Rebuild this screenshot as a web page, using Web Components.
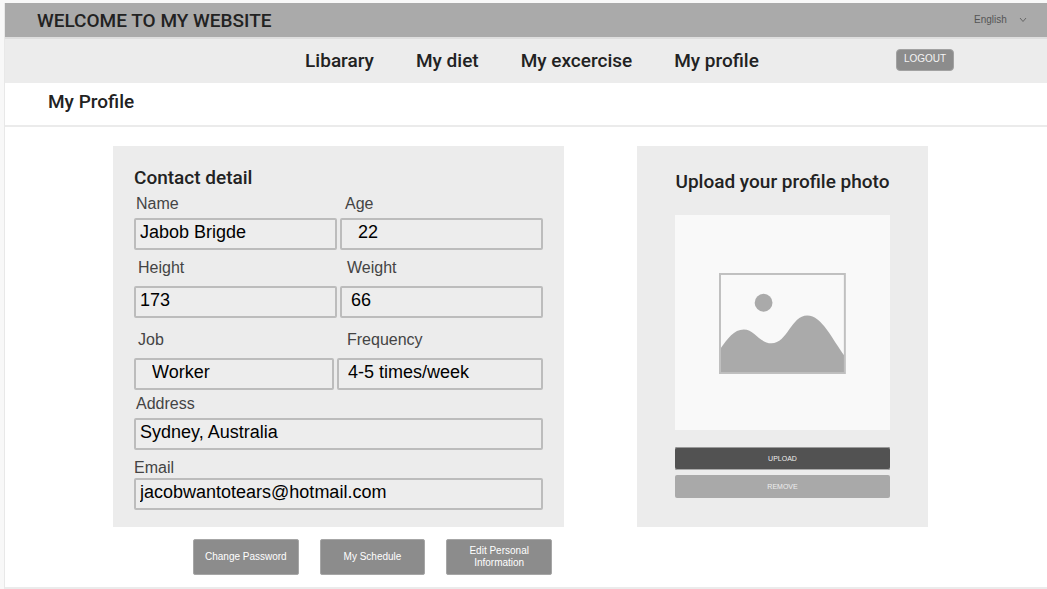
<!DOCTYPE html>
<html lang="en">
<head>
<meta charset="utf-8">
<title>My Profile</title>
<style>
  body { margin: 0; background: #f8f8f8; color: #222; font-family: "Liberation Sans", Arial, sans-serif; --display: Roboto, "Noto Sans", sans-serif; }
</style>
</head>
<body>
<profile-page></profile-page>
<script>
const define = (name, html, setup) => {
  const template = document.createElement('template');
  template.innerHTML = html;
  customElements.define(name, class extends HTMLElement {
    constructor() {
      super();
      this.attachShadow({ mode: 'open' }).append(template.content.cloneNode(true));
    }
    connectedCallback() { if (setup) setup(this, this.shadowRoot); }
  });
};

define('site-header', `
<style>
  :host { display: block; }
  header { display: flex; align-items: center; justify-content: space-between; height: 34px; padding: 0 20px 0 32px; background: #aaa; border-bottom: 2px solid #dedede; }
  .brand { font: 500 19px/24px var(--display); padding-top: 2px; }
  .lang { display: flex; align-items: center; gap: 12px; }
  select { appearance: none; border: 0; margin: 0; padding: 0; background: none; color: #555; font: 10px/12px "Liberation Sans", sans-serif; }
  svg { width: 8px; height: 6px; }
</style>
<header>
  <div class="brand">WELCOME TO MY WEBSITE</div>
  <div class="lang">
    <select aria-label="Language"><option>English</option></select>
    <svg viewBox="0 0 8 6" aria-hidden="true"><path d="M1 1l3 3.5L7 1" fill="none" stroke="#666"/></svg>
  </div>
</header>`);

define('site-nav', `
<style>
  :host { display: block; }
  nav { display: grid; grid-template-columns: 1fr auto 1fr; align-items: center; height: 44px; padding: 0 93px 0 105px; background: #ececec; }
  .links { grid-column: 2; display: flex; gap: 42px; }
  ::slotted(a) { color: #222; text-decoration: none; font: 500 19px/24px var(--display); }
  button { justify-self: end; width: 58px; height: 22px; margin-bottom: 3px; padding: 0 0 2px; border: 1px solid #a2a2a2; border-radius: 4px; background: #8c8c8c; color: #f4f4f4; font: 10px/12px "Liberation Sans", sans-serif; }
</style>
<nav><div class="links"><slot></slot></div><button type="button">LOGOUT</button></nav>`);

define('page-title', `
<style>
  :host { display: block; background: #fff; border-bottom: 2px solid #ebebeb; }
  h1 { margin: 0; padding: 7px 43px 11px; font: 500 19px/24px var(--display); }
</style>
<h1><slot></slot></h1>`);

define('grey-card', `
<style>
  :host { display: block; background: #ececec; }
</style>
<slot></slot>`);

define('text-field', `
<style>
  :host { display: flex; flex-direction: column; gap: var(--label-gap, 8px); min-width: 0; }
  label { padding-left: var(--label-inset, 4px); font-size: 16px; line-height: 20px; color: #444; }
  input { box-sizing: border-box; width: 100%; height: 32px; margin: 0; padding: 0 4px 4px var(--inset, 4px); border: 2px solid #bcbcbc; border-radius: 2px; background: #ededed; color: #000; font: 18px/24px "Liberation Sans", Arial, sans-serif; }
  :host([indented]) input { padding-left: 16px; }
</style>
<label for="field"></label><input id="field">`, (host, root) => {
  root.querySelector('label').textContent = host.getAttribute('label');
  const input = root.querySelector('input');
  input.type = host.getAttribute('type') || 'text';
  input.value = host.getAttribute('value');
});

define('contact-form', `
<style>
  :host { display: block; padding: 20px 21px 17px; }
  h2 { margin: 0 0 4px; font: 500 19px/24px var(--display); }
  .row { display: grid; grid-template-columns: 1fr 1fr; gap: 3px; }
  .first { --label-gap: 4px; --label-inset: 2px; }
  .second { margin-top: 8px; }
  .third { margin-top: 12px; grid-template-columns: 200fr 206fr; }
  .row > :last-child { --inset: 9px; --label-inset: 7px; }
  .first > :last-child { --label-inset: 5px; }
  .third > :last-child { --label-inset: 10px; }
  .address { margin-top: 4px; --label-gap: 4px; --label-inset: 2px; }
  .email { margin-top: 8px; --label-gap: 0px; --label-inset: 0px; }
</style>
<h2>Contact detail</h2>
<div class="row first"><text-field label="Name" value="Jabob Brigde"></text-field><text-field label="Age" value="22" indented></text-field></div>
<div class="row second"><text-field label="Height" value="173"></text-field><text-field label="Weight" value="66"></text-field></div>
<div class="row third"><text-field label="Job" value="Worker" indented></text-field><text-field label="Frequency" value="4-5 times/week"></text-field></div>
<text-field class="address" label="Address" value="Sydney, Australia"></text-field>
<text-field class="email" label="Email" type="email" value="jacobwantotears@hotmail.com"></text-field>`);

define('photo-upload', `
<style>
  :host { display: flex; flex-direction: column; padding: 24px 38px 0; }
  h2 { margin: 0 0 21px; white-space: nowrap; text-align: center; font: 500 19px/24px var(--display); }
  .preview { display: grid; place-items: center; box-sizing: border-box; aspect-ratio: 1; margin-bottom: 17px; padding-top: 2px; background: #f9f9f9; }
  svg { width: 59%; }
  button { height: 23px; padding: 0; margin-bottom: 5px; border: 0; border-radius: 2px; color: #eee; font: 7px/8px "Liberation Sans", sans-serif; }
  .upload { background: #525252; box-shadow: inset 0 1px #999, inset 0 -1px #aaa; }
  .remove { background: #a9a9a9; }
</style>
<h2>Upload your profile photo</h2>
<div class="preview">
  <svg viewBox="0 0 128 102" role="img" aria-label="No photo yet">
    <path d="M1 77C9 66 15 57 25 57C36 57 41 71 53 71C69 71 73 43 89 43C104 43 114 67 127 84V101H1Z" fill="#aaa"/>
    <circle cx="45" cy="30" r="9" fill="#aaa"/>
    <rect x="1" y="1" width="126" height="100" fill="none" stroke="#c0c0c0" stroke-width="2"/>
  </svg>
</div>
<button type="button" class="upload">UPLOAD</button>
<button type="button" class="remove">REMOVE</button>`);

define('profile-actions', `
<style>
  :host { display: flex; gap: 21px; padding: 12px 12px 12px 80px; }
  button { flex: 1; height: 36px; padding: 0 10px; border: 1px solid #a6a6a6; border-radius: 2px; background: #8c8c8c; color: #fff; font: 10px/12px "Liberation Sans", Arial, sans-serif; }
</style>
<button type="button">Change Password</button><button type="button">My Schedule</button><button type="button">Edit Personal Information</button>`);

define('profile-page', `
<style>
  :host { display: block; padding: 3px 0 0 4px; }
  .frame { border-left: 1px solid #e8e8e8; border-bottom: 2px solid #ebebeb; background: #fff; }
  main { display: grid; grid-template-columns: 451fr 291fr; column-gap: 73px; padding: 19px 119px 0 108px; }
</style>
<div class="frame">
  <site-header></site-header>
  <site-nav>
    <a href="#library">Libarary</a><a href="#diet">My diet</a><a href="#exercise">My excercise</a><a href="#profile">My profile</a>
  </site-nav>
  <page-title>My Profile</page-title>
  <main>
    <grey-card><contact-form></contact-form></grey-card>
    <grey-card><photo-upload></photo-upload></grey-card>
    <profile-actions></profile-actions>
  </main>
</div>`);
</script>
</body>
</html>
